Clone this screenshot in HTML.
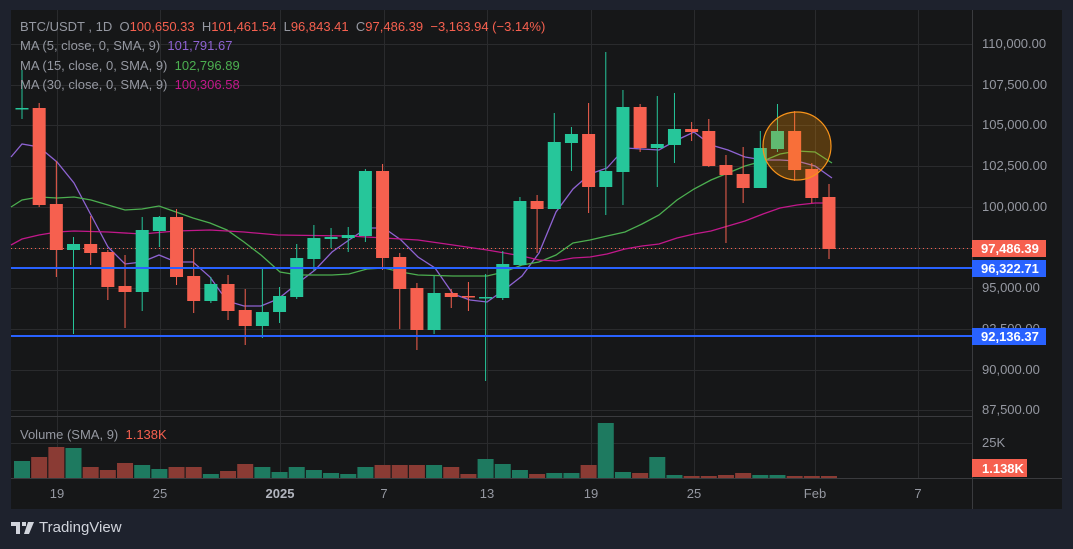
<!DOCTYPE html>
<html><head><meta charset="utf-8"><style>
html,body{margin:0;padding:0;background:#1e222d;width:1073px;height:549px;overflow:hidden;font-family:"Liberation Sans",sans-serif}
#c{position:absolute;left:0;top:0}
.lg{position:absolute;left:20px;font-size:13px;color:#9598a1;white-space:nowrap}
.tv{position:absolute;left:11px;top:519px;font-size:15px;color:#d1d4dc;display:flex;align-items:center}
</style></head><body>
<svg id="c" width="1073" height="549" xmlns="http://www.w3.org/2000/svg" font-family="Liberation Sans, sans-serif">
<rect x="11" y="10" width="1051" height="499" fill="#161718"/>
<g id="grid" stroke="#2a2b2d" stroke-width="1"></g>
<line x1="11" y1="416.5" x2="972" y2="416.5" stroke="#3a3b3e"/>
<line x1="11" y1="478.5" x2="1062" y2="478.5" stroke="#3a3b3e"/>
<line x1="972.5" y1="10" x2="972.5" y2="509" stroke="#3a3b3e"/>
<g id="vol"></g>
<line x1="11" y1="248.5" x2="972" y2="248.5" stroke="#f6604f" stroke-dasharray="1,3"/>
<g id="ma" fill="none" stroke-width="1.3"></g>
<g id="cnd"></g>
<line x1="11" y1="268" x2="972" y2="268" stroke="#2962ff" stroke-width="2"/>
<line x1="11" y1="336" x2="972" y2="336" stroke="#2962ff" stroke-width="2"/>
<circle cx="797" cy="146" r="34" fill="rgba(255,152,0,0.27)" stroke="#f7931a" stroke-width="1.2"/>
<g fill="#9598a1" font-size="13">
<text x="982" y="48">110,000.00</text><text x="982" y="89">107,500.00</text><text x="982" y="129">105,000.00</text>
<text x="982" y="170">102,500.00</text><text x="982" y="211">100,000.00</text><text x="982" y="292">95,000.00</text>
<text x="982" y="333">92,500.00</text><text x="982" y="374">90,000.00</text><text x="982" y="414">87,500.00</text>
<text x="982" y="447">25K</text>
<text x="57" y="498" text-anchor="middle">19</text><text x="160" y="498" text-anchor="middle">25</text>
<text x="280" y="498" text-anchor="middle" font-weight="bold" fill="#b2b5be">2025</text>
<text x="384" y="498" text-anchor="middle">7</text><text x="487" y="498" text-anchor="middle">13</text>
<text x="591" y="498" text-anchor="middle">19</text><text x="694" y="498" text-anchor="middle">25</text>
<text x="815" y="498" text-anchor="middle">Feb</text><text x="918" y="498" text-anchor="middle">7</text>
</g>
<rect x="972" y="240" width="74" height="17" fill="#f6604f"/>
<rect x="972" y="260" width="74" height="17" fill="#2962ff"/>
<rect x="972" y="328" width="74" height="17" fill="#2962ff"/>
<rect x="972" y="459" width="55" height="18" fill="#f6604f"/>
<g fill="#fff" font-size="13" font-weight="bold">
<text x="981" y="253">97,486.39</text><text x="981" y="273">96,322.71</text><text x="981" y="341">92,136.37</text><text x="982" y="473">1.138K</text>
</g>
</svg>
<div class="lg" style="top:19px">BTC/USDT , 1D &nbsp;O<span style="color:#f6604f">100,650.33</span> &nbsp;H<span style="color:#f6604f">101,461.54</span> &nbsp;L<span style="color:#f6604f">96,843.41</span> &nbsp;C<span style="color:#f6604f">97,486.39</span> &nbsp;<span style="color:#f6604f">−3,163.94 (−3.14%)</span></div>
<div class="lg" style="top:38px">MA (5, close, 0, SMA, 9) &nbsp;<span style="color:#8e63d2">101,791.67</span></div>
<div class="lg" style="top:58px">MA (15, close, 0, SMA, 9) &nbsp;<span style="color:#4caf50">102,796.89</span></div>
<div class="lg" style="top:77px">MA (30, close, 0, SMA, 9) &nbsp;<span style="color:#c2188b">100,306.58</span></div>
<div class="lg" style="top:427px">Volume (SMA, 9) &nbsp;<span style="color:#f6604f">1.138K</span></div>
<div class="tv"><svg width="24" height="14" viewBox="0 0 24 14"><path d="M0 1h9v12H5V5H0z M11 1h4v4h-4z M17 1h6l-5 12h-5z" fill="#d1d4dc"/></svg><span style="margin-left:4px">TradingView</span></div>
<script>
var NS="http://www.w3.org/2000/svg";
function el(p,t,a){var e=document.createElementNS(NS,t);for(var k in a)e.setAttribute(k,a[k]);p.appendChild(e);return e;}
var g=document.getElementById('grid');
[44,85,125,166,207,248,288,329,370,410,443].forEach(function(y){el(g,'line',{x1:11,x2:972,y1:y+.5,y2:y+.5});});
[57,160,280,384,487,591,694,815,918].forEach(function(x){el(g,'line',{x1:x+.5,x2:x+.5,y1:10,y2:478});});
var C=[
['g',108,109,70,119],['r',108,205,103,207],['r',204,250,161,277],['g',244,250,237,334],['r',244,253,216,265],['r',252,287,250,300],['r',286,292,255,328],['g',230,292,217,311],['g',217,231,216,247],['r',217,277,209,285],['r',276,301,249,313],['g',284,301,277,303],['r',284,311,275,320],['r',310,326,289,345],['g',312,326,269,338],['g',296,312,287,323],
['g',258,297,244,299],['g',238,259,225,271],['g',237,239,228,248],['g',235,238,227,252],['g',171,236,169,242],['r',171,258,164,270],['r',257,289,253,329],['r',288,330,283,350],['g',293,330,276,334],['r',293,297,289,308],['r',296,297,282,311],['g',297,298,274,381],['g',264,298,251,300],['g',201,265,197,266],['r',201,209,195,253],
['g',142,209,113,209],['g',134,143,127,171],['r',134,187,103,213],['g',171,187,52,215],['g',107,172,90,205],['r',107,148,104,152],['g',144,148,96,187],['g',129,145,93,163],['r',129,132,122,141],['r',131,166,119,167],['r',165,175,155,243],['r',174,188,147,203],['g',148,188,131,188],['g',131,149,104,152],['r',131,170,111,181],['r',169,198,163,203],['r',197,249,184,259]];
var V=[461,457,447,448,467,470,463,465,469,467,467,474,471,464,467,472,467,470,473,474,467,465,465,465,465,467,474,459,464,470,474,473,473,465,423,472,473,457,475,476,476,475,473,475,475,476,476,476];
var cg=document.getElementById('cnd'),vg=document.getElementById('vol');
C.forEach(function(c,i){var x=22+i*17.17;var col=c[0]=='g'?'#26c69a':'#f6604f';
el(cg,'line',{x1:x,x2:x,y1:c[3],y2:c[4],stroke:col,'stroke-width':1});
el(cg,'rect',{x:x-6.5,y:c[1],width:13,height:Math.max(1.5,c[2]-c[1]),fill:col});
el(vg,'rect',{x:x-8,y:V[i],width:16,height:478-V[i],fill:c[0]=='g'?'#1e7a60':'#8a3b34'});});
var M=[['#8e63d2',[[11,157],[22,144],[39,147],[57,162],[74,183],[91,215],[108,247],[125,264],[142,262],[159,255],[176,262],[193,262],[210,277],[227,301],[244,306],[261,306],[278,299],[298,283],[315,270],[332,252],[349,240],[367,228],[384,228],[401,240],[418,257],[435,268],[453,294],[470,300],[487,302],[504,290],[522,276],[539,253],[556,212],[573,189],[590,174],[607,168],[625,148],[642,149],[659,150],[677,140],[694,132],[711,145],[728,150],[745,157],[763,160],[780,160],[797,161],[815,166],[832,178]]],
['#4caf50',[[11,207],[22,200],[39,197],[57,198],[74,197],[91,200],[108,205],[125,210],[142,209],[159,206],[176,212],[193,218],[210,223],[227,230],[244,242],[261,255],[280,272],[298,275],[332,275],[349,274],[367,269],[384,268],[401,272],[418,275],[453,276],[487,276],[504,272],[522,265],[539,262],[556,255],[573,243],[590,240],[607,236],[625,232],[642,224],[659,215],[677,200],[694,189],[711,180],[728,173],[745,166],[763,161],[780,154],[797,151],[815,152],[832,163]]],
['#c2188b',[[11,245],[22,239],[39,235],[57,232],[74,231],[108,232],[142,234],[176,231],[210,230],[244,232],[278,235],[349,236],[384,238],[418,240],[453,245],[487,250],[522,256],[539,260],[556,261],[573,258],[590,257],[607,254],[625,249],[642,246],[659,244],[677,238],[694,234],[711,231],[728,226],[745,221],[763,214],[780,208],[797,205],[815,203],[832,203]]]];
var mg=document.getElementById('ma');
M.forEach(function(m){el(mg,'polyline',{points:m[1].map(function(p){return p.join(',')}).join(' '),stroke:m[0]});});
</script>
</body></html>
